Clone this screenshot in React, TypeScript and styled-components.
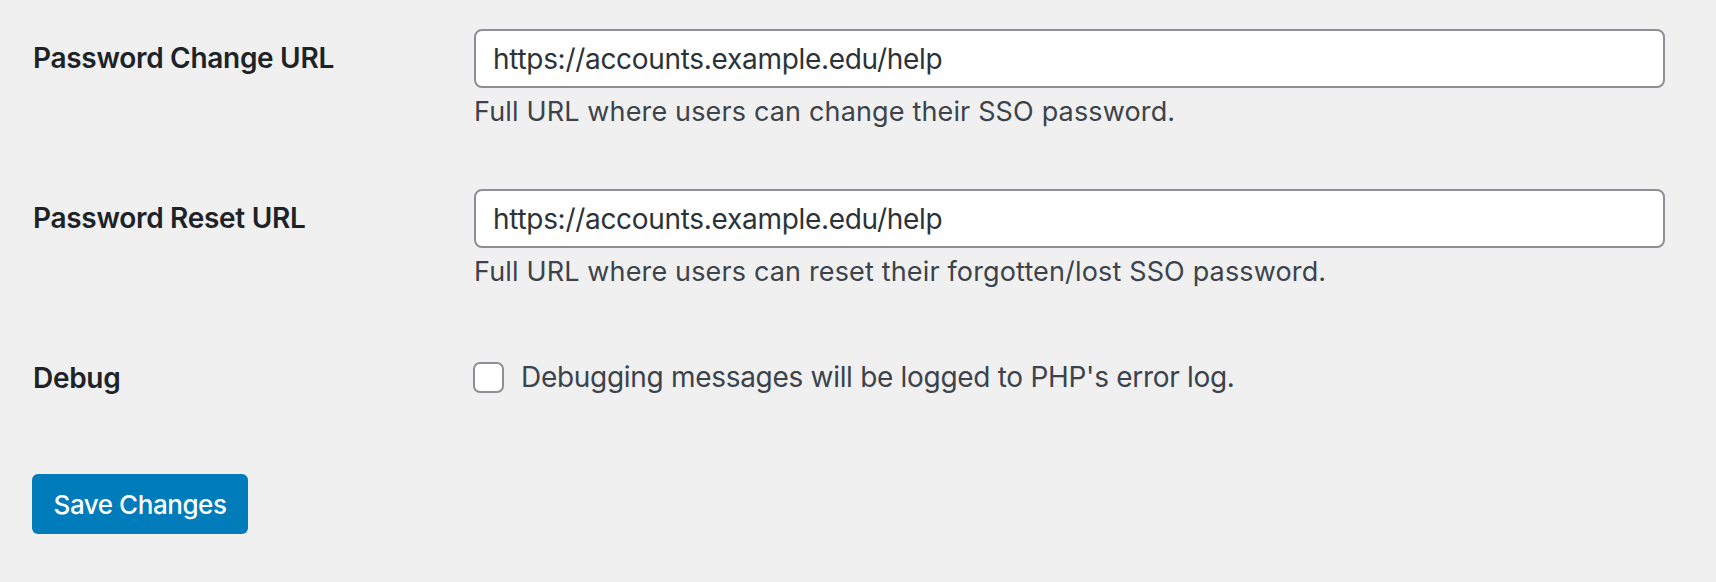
import * as React from 'react';
import styled, { createGlobalStyle } from 'styled-components';

const GlobalStyle = createGlobalStyle`
  html, body {
    margin: 0;
    padding: 0;
    background: #f0f0f1;
  }
  body {
    font-family: Inter, "Noto Sans", "Liberation Sans", sans-serif;
    -webkit-font-smoothing: antialiased;
  }
`;

const Form = styled.form`
  display: flex;
  flex-direction: column;
  padding: 0 51px 0 33px;
  height: 582px;
  box-sizing: border-box;
`;

interface RowProps {
  top: number;
  bottom: number;
}
const Row = styled.div<RowProps>`
  display: grid;
  grid-template-columns: 441px 1fr;
  padding-top: ${(p) => p.top}px;
  padding-bottom: ${(p) => p.bottom}px;
`;

interface LabelProps {
  offset: number;
}
const Label = styled.label<LabelProps>`
  font-size: 28px;
  font-weight: 600;
  line-height: 36px;
  color: #1d2327;
  padding-top: ${(p) => p.offset}px;
  letter-spacing: -0.3px;
`;

const Field = styled.div`
  display: flex;
  flex-direction: column;
`;

const TextInput = styled.input`
  box-sizing: border-box;
  width: 100%;
  height: 59px;
  margin: 0;
  padding: 0 17px;
  border: 2px solid #8c8f94;
  border-radius: 8px;
  background: #fff;
  color: #2c3338;
  font-family: inherit;
  font-size: 28px;
  letter-spacing: -0.3px;
  outline: none;
`;

const Description = styled.p`
  margin: 6px 0 0;
  font-size: 27px;
  line-height: 36px;
  color: #3c434a;
  letter-spacing: 0.15px;
`;

const CheckLine = styled.label`
  display: flex;
  align-items: center;
  gap: 17px;
  margin-left: -1px;
  font-size: 28px;
  line-height: 36px;
  color: #3c434a;
  letter-spacing: -0.3px;
`;

const Box = styled.input`
  appearance: none;
  flex: 0 0 31px;
  width: 31px;
  height: 31px;
  margin: 0;
  border: 2px solid #8c8f94;
  border-radius: 7px;
  background: #fff;
  box-sizing: border-box;
`;

const Submit = styled.div`
  padding-top: 0;
`;

const Button = styled.button`
  height: 60px;
  width: 216px;
  margin-left: -1px;
  padding: 0 20px;
  border: 0;
  border-radius: 6px;
  background: #007cba;
  color: #fff;
  font-family: inherit;
  font-size: 26px;
  font-weight: 500;
  letter-spacing: -0.45px;
  cursor: pointer;
`;

const urlFields = [
  {
    id: 'change',
    label: 'Password Change URL',
    value: 'https://accounts.example.edu/help',
    hint: 'Full URL where users can change their SSO password.',
  },
  {
    id: 'reset',
    label: 'Password Reset URL',
    value: 'https://accounts.example.edu/help',
    hint: 'Full URL where users can reset their forgotten/lost SSO password.',
  },
];

export default function App() {
  return (
    <>
      <GlobalStyle />
      <Form onSubmit={(e) => e.preventDefault()}>
        {urlFields.map((f) => (
          <Row key={f.id} top={29} bottom={30}>
            <Label htmlFor={f.id} offset={11}>
              {f.label}
            </Label>
            <Field>
              <TextInput id={f.id} type="text" defaultValue={f.value} />
              <Description>{f.hint}</Description>
            </Field>
          </Row>
        ))}
        <Row top={38} bottom={78}>
          <Label htmlFor="debug" offset={2}>
            Debug
          </Label>
          <CheckLine>
            <Box id="debug" type="checkbox" />
            Debugging messages will be logged to PHP's error log.
          </CheckLine>
        </Row>
        <Submit>
          <Button type="submit">Save Changes</Button>
        </Submit>
      </Form>
    </>
  );
}
